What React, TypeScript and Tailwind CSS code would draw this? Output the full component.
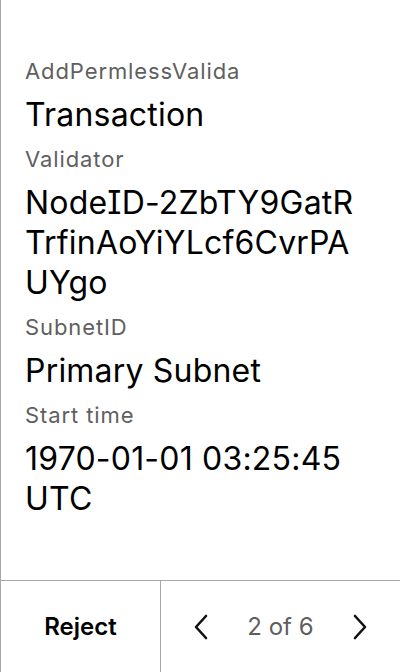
import { ReactNode } from "react";

interface IPropsField {
  label: string;
  children: ReactNode;
  breakAll?: boolean;
}

const Field = ({ label, children, breakAll }: IPropsField) => (
  <div className="flex flex-col">
    <div className="text-[22px] leading-[28px] tracking-[0.9px] text-[#5f5f5f]">
      {label}
    </div>
    <div
      className={
        breakAll
          ? "mt-[10px] mb-[10px] text-[32px] leading-[40px] tracking-[0.2px] text-black break-all [font-feature-settings:'cv08']"
          : "mt-[10px] mb-[10px] text-[32px] leading-[40px] tracking-[0.2px] text-black break-words [font-feature-settings:'cv08']"
      }
    >
      {children}
    </div>
  </div>
);

const Chevron = ({ dir }: { dir: "left" | "right" }) => (
  <svg width="16" height="26" viewBox="0 0 16 26" fill="none">
    <path
      d={dir === "left" ? "M13 2 L3 13 L13 24" : "M3 2 L13 13 L3 24"}
      stroke="#111"
      strokeWidth="2.6"
      strokeLinecap="round"
      strokeLinejoin="round"
    />
  </svg>
);

export default function App() {
  return (
    <div
      className="w-[400px] h-[672px] flex flex-col bg-white border-l border-[#a9a9a9]"
      style={{ fontFamily: "Inter, 'Noto Sans', sans-serif" }}
    >
      <div className="flex-1 pl-[24px] pr-[32px] pt-[57px]">
        <Field label="AddPermlessValida">Transaction</Field>
        <Field label="Validator" breakAll>
          NodeID-2ZbTY9GatRTrfinAoYiYLcf6CvrPAUYgo
        </Field>
        <Field label="SubnetID">Primary Subnet</Field>
        <Field label="Start time">1970-01-01 03:25:45 UTC</Field>
      </div>
      <div className="h-[92px] flex border-t border-[#a9a9a9]">
        <button
          type="button"
          className="w-[160px] flex items-center justify-center text-[24px] font-semibold text-black border-r border-[#a9a9a9]"
        >
          Reject
        </button>
        <div className="flex-1 flex items-center justify-between px-[32px]">
          <button type="button" className="flex items-center">
            <Chevron dir="left" />
          </button>
          <span className="text-[24px] text-[#5f5f5f]">2 of 6</span>
          <button type="button" className="flex items-center">
            <Chevron dir="right" />
          </button>
        </div>
      </div>
    </div>
  );
}
